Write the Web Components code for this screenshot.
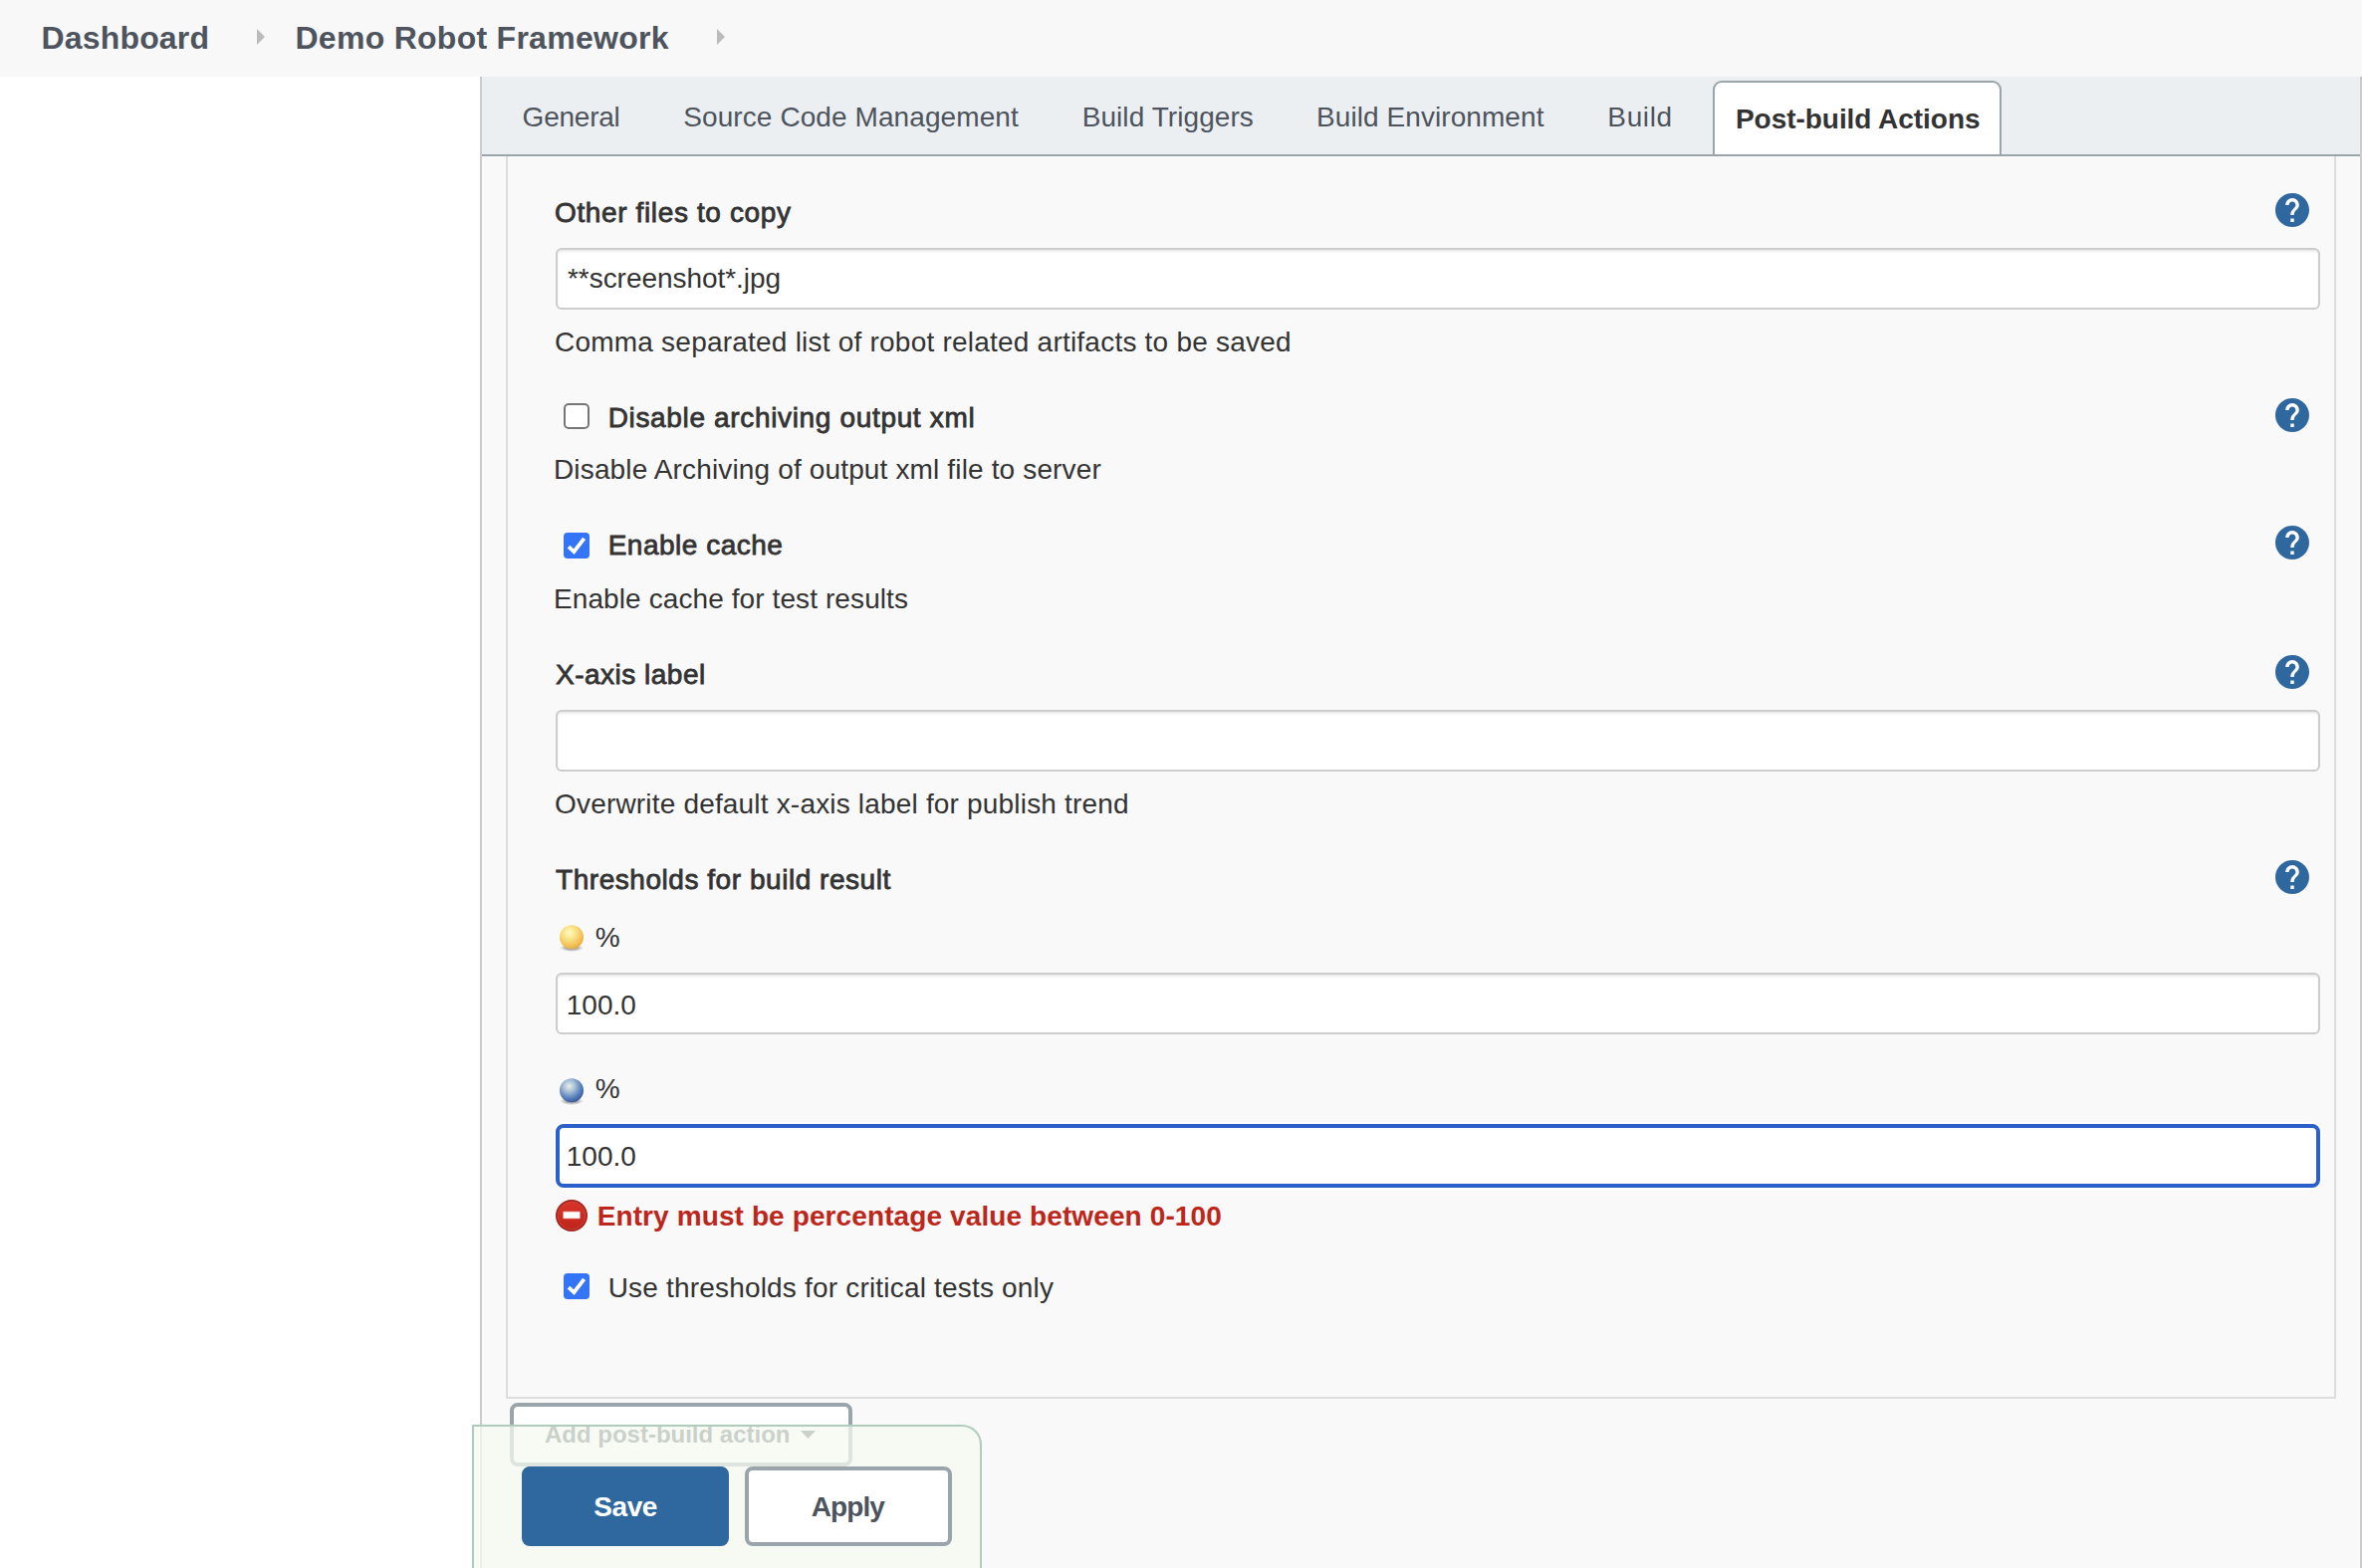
<!DOCTYPE html>
<html lang="en">
<head>
<meta charset="utf-8">
<title>Demo Robot Framework Config</title>
<style>
html,body{margin:0;height:100%;overflow:hidden;background:#fff}
body{font-family:"Liberation Sans",Arial,sans-serif;font-size:28px;color:#333}
</style>
</head>
<body>
<config-page></config-page>
<script>
const ctx = document.createElement('canvas').getContext('2d');
function define(name, html, setup) {
  const t = document.createElement('template');
  t.innerHTML = html;
  customElements.define(name, class extends HTMLElement {
    constructor() { super(); this.attachShadow({mode: 'open'}).append(t.content.cloneNode(true)); }
    connectedCallback() { if (setup) setup(this, this.shadowRoot); }
  });
}

/* One line of text spread over a given width, starting at its own left edge */
define('fit-text', `<style>
:host{display:block;flex:none;white-space:pre;font-size:28px;line-height:39px;height:39px}
:host([weight=medium]){-webkit-text-stroke:.8px currentColor}
:host([weight=bold]){font-weight:700}
:host([size="32"]){font-size:32px;line-height:40px;height:40px}
:host([size="24"]){font-size:24px;line-height:31px;height:31px}
span{display:block}
</style><span><slot></slot></span>`, (el, root) => {
  const text = el.textContent, w = +el.getAttribute('w'), size = el.getAttribute('size') || 28;
  ctx.font = `${el.getAttribute('weight') === 'bold' ? 'bold ' : ''}${size}px "Liberation Sans"`;
  const m = ctx.measureText(text);
  const ink = m.actualBoundingBoxLeft + m.actualBoundingBoxRight;
  const s = root.querySelector('span');
  el.style.width = w + 'px';
  s.style.marginLeft = m.actualBoundingBoxLeft + 'px';
  if (text.length > 1) s.style.letterSpacing = (w - ink) / (text.length - 1) + 'px';
});

define('help-icon', `<style>:host{display:block;flex:none;width:34px;height:34px;margin-left:auto;margin-right:11px}svg{display:block}</style>
<svg width="34" height="34" viewBox="2 2 20 20"><circle cx="12" cy="12" r="8" fill="#fff"/><path fill="#2f689f" d="M12 2C6.48 2 2 6.48 2 12s4.48 10 10 10 10-4.48 10-10S17.52 2 12 2zm1 17h-2v-2h2v2zm2.07-7.75l-.9.92C13.45 12.9 13 13.500 13 15h-2v-.5c0-1.100.45-2.100 1.170-2.830l1.240-1.260c.37-.36.59-.86.59-1.410 0-1.100-.9-2-2-2s-2 .9-2 2H8c0-2.210 1.790-4 4-4s4 1.790 4 4c0 .88-.36 1.680-.93 2.250z"/></svg>`);

define('form-row', `<style>:host{display:flex;align-items:flex-start;height:39px}</style><slot></slot>`);

define('text-box', `<style>
:host{display:block;box-sizing:border-box;height:62px;margin-top:16px;border:2px solid #ccc;border-radius:6px;background:#fff;padding:9px 0 0 10px;box-shadow:inset 0 2px 2px rgba(0,0,0,.075)}
:host([number]){padding-top:11px;padding-left:10.7px}
:host([focused]){height:64px;border:4px solid #2b60c9;border-radius:8px;padding:9px 0 0 8.7px;box-shadow:0 0 0 2px #fff}
</style><slot></slot>`);

define('check-box', `<style>
:host{display:block;flex:none;width:26px;height:26px;margin:5px 20.7px 0 8px}
:host([low]){margin-top:7px}
svg{display:block}.on{display:none}
:host([checked]) .on{display:block}:host([checked]) .off{display:none}
</style>
<svg class="off" width="26" height="26"><rect x="1" y="1" width="24" height="24" rx="4" fill="#fff" stroke="#767676" stroke-width="2"/></svg>
<svg class="on" width="26" height="26"><rect width="26" height="26" rx="4" fill="#3474f6"/><path d="M5 14.200L10.400 19.200L20.600 5.800" fill="none" stroke="#fff" stroke-width="3.800"/></svg>`);

define('status-ball', `<style>:host{display:block;flex:none;width:26px;height:30px;margin:6px 11.700px 0 3px}svg{display:block}.b{display:none}:host([blue]) .b{display:block}:host([blue]) .y{display:none}:host([blue]){margin-top:8px}</style>
<svg width="26" height="30"><defs>
<radialGradient id="y" cx=".4" cy=".32" r=".68"><stop offset="0" stop-color="#fffbc4"/><stop offset=".45" stop-color="#f8e080"/><stop offset=".85" stop-color="#f3bb50"/><stop offset="1" stop-color="#e0b04c"/></radialGradient>
<radialGradient id="b" cx=".4" cy=".32" r=".7"><stop offset="0" stop-color="#eef0e2"/><stop offset=".3" stop-color="#b0c6da"/><stop offset=".7" stop-color="#5c84bd"/><stop offset="1" stop-color="#34599a"/></radialGradient>
<radialGradient id="s"><stop offset=".5" stop-color="#777" stop-opacity=".6"/><stop offset="1" stop-color="#999" stop-opacity="0"/></radialGradient></defs>
<ellipse cx="13" cy="24" rx="12" ry="4" fill="url(#s)"/>
<circle class="y" cx="13" cy="13.300" r="12" fill="url(#y)"/><circle class="b" cx="13" cy="13.300" r="12" fill="url(#b)"/></svg>`);

define('error-icon', `<style>:host{display:block;flex:none;width:32px;height:32px;margin:3px 10.700px 0 0}svg{display:block}</style>
<svg width="32" height="32"><defs><linearGradient id="r" x1="0" y1="0" x2="0" y2="1"><stop offset="0" stop-color="#d8352a"/><stop offset="1" stop-color="#bf241b"/></linearGradient></defs>
<circle cx="16" cy="16" r="16" fill="#a5251d"/><circle cx="16" cy="16" r="13.800" fill="url(#r)" stroke="#d5473d" stroke-width=".8"/><rect x="7.500" y="12" width="17" height="7" rx=".6" fill="#fff" stroke="#e58a83" stroke-width=".7"/></svg>`);

define('crumb-arrow', `<style>:host{display:block;flex:none;width:8px;height:16px}svg{display:block}</style><svg width="8" height="16"><path d="M0 0L8 8L0 16Z" fill="#bbb"/></svg>`);

define('crumb-bar', `<style>
:host{display:flex;align-items:flex-start;height:77px;background:#f8f8f8;color:#4d545d;box-sizing:border-box;padding:18px 0 0 43.600px}
crumb-arrow{margin:11px 0 0 49.500px}
.second{margin-left:32.600px}.last{margin-left:48px}
</style><fit-text size="32" weight="bold" w="164.800">Dashboard</fit-text><crumb-arrow></crumb-arrow>
<fit-text class="second" size="32" weight="bold" w="373.200">Demo Robot Framework</fit-text><crumb-arrow class="last"></crumb-arrow>`);

define('tab-bar', `<style>
:host{display:flex;align-items:flex-start;height:78px;background:#ebeff2;border-bottom:2px solid #9aa5ab;color:#4d545d;padding-left:41.600px}
fit-text{margin:21px 65.700px 0 0}
.active{box-sizing:border-box;width:290px;height:74px;margin:4px 0 0 -23px;border:2px solid #9aa5ab;border-bottom:0;border-radius:9px 9px 0 0;background:#fff;color:#333}
.active fit-text{margin:17px 0 0 21.700px}
</style>
<fit-text w="96">General</fit-text><fit-text w="335.700">Source Code Management</fit-text><fit-text w="169.700">Build Triggers</fit-text><fit-text w="226.600">Build Environment</fit-text><fit-text w="61.300">Build</fit-text>
<div class="active"><fit-text weight="bold" w="245">Post-build Actions</fit-text></div>`);

define('robot-section', `<style>
:host{display:block;box-sizing:border-box;height:1248px;margin:0 24px;border:solid #ddd;border-width:0 2px 2px;padding:37px 14px 0 48px}
.g{margin-top:37px}.d{margin-top:13px}
</style>
<form-row><fit-text weight="medium" w="236">Other files to copy</fit-text><help-icon></help-icon></form-row>
<text-box><fit-text w="212.500">**screenshot*.jpg</fit-text></text-box>
<fit-text class="d" w="737">Comma separated list of robot related artifacts to be saved</fit-text>
<form-row class="g"><check-box></check-box><fit-text weight="medium" w="364.700">Disable archiving output xml</fit-text><help-icon></help-icon></form-row>
<fit-text class="d" w="549">Disable Archiving of output xml file to server</fit-text>
<form-row class="g"><check-box checked low></check-box><fit-text weight="medium" w="172.600">Enable cache</fit-text><help-icon></help-icon></form-row>
<fit-text style="margin-top:15px" w="353">Enable cache for test results</fit-text>
<form-row class="g"><fit-text weight="medium" w="149">X-axis label</fit-text><help-icon></help-icon></form-row>
<text-box></text-box>
<fit-text class="d" w="574">Overwrite default x-axis label for publish trend</fit-text>
<form-row class="g"><fit-text weight="medium" w="336.500">Thresholds for build result</fit-text><help-icon></help-icon></form-row>
<form-row style="margin-top:19px"><status-ball></status-ball><fit-text w="24">%</fit-text></form-row>
<text-box number><fit-text w="67.600">100.0</fit-text></text-box>
<form-row style="margin-top:35px"><status-ball blue></status-ball><fit-text w="24">%</fit-text></form-row>
<text-box focused><fit-text w="67.600">100.0</fit-text></text-box>
<form-row style="margin-top:9px;color:#bd261b"><error-icon></error-icon><fit-text weight="bold" w="625.500">Entry must be percentage value between 0-100</fit-text></form-row>
<form-row style="margin-top:33px"><check-box checked></check-box><fit-text w="445.300">Use thresholds for critical tests only</fit-text></form-row>`);

define('push-button', `<style>
:host{display:flex;justify-content:center;align-items:flex-start;box-sizing:border-box;width:208px;height:80px;border:4px solid #9aa5ab;border-radius:8px;background:#fff;color:#4d545d;padding-top:17px}
:host([primary]){background:#2f689f;border-color:#2f689f;color:#fff}
:host([menu]){width:344px;height:64px;padding:12px 0 0 31px;margin:4px 0 0 28px;justify-content:flex-start}
svg{display:none;margin:12px 0 0 11.600px}:host([menu]) svg{display:block}
</style><slot></slot><svg width="15" height="8"><path d="M0 0H15L7.500 8Z" fill="#4d545d"/></svg>`);

define('save-bar', `<style>
:host{position:absolute;left:474px;top:1431px;box-sizing:border-box;width:512px;height:144px;display:flex;gap:16px;padding:40px 0 0 48px;border:2px solid #b0ccbd;border-bottom:0;border-radius:0 20px 0 0;background:rgba(244,249,239,.75);background-clip:padding-box}
</style><push-button primary><fit-text weight="bold" w="63.600">Save</fit-text></push-button><push-button><fit-text weight="bold" w="74.700">Apply</fit-text></push-button>`);

define('config-page', `<style>
:host{display:flex;flex-direction:column;width:2372px;height:1575px;position:relative;overflow:hidden}
.body{flex:1;display:flex}
.side{width:482px;flex:none}
.main{flex:1;min-width:0;border:solid #ccc;border-width:0 2px;background:#f9f9f9}
</style><crumb-bar></crumb-bar><div class="body"><div class="side"></div><div class="main"><tab-bar></tab-bar><robot-section></robot-section>
<push-button menu><fit-text size="24" weight="bold" w="245.800">Add post-build action</fit-text></push-button></div></div><save-bar></save-bar>`);
</script>
</body>
</html>
